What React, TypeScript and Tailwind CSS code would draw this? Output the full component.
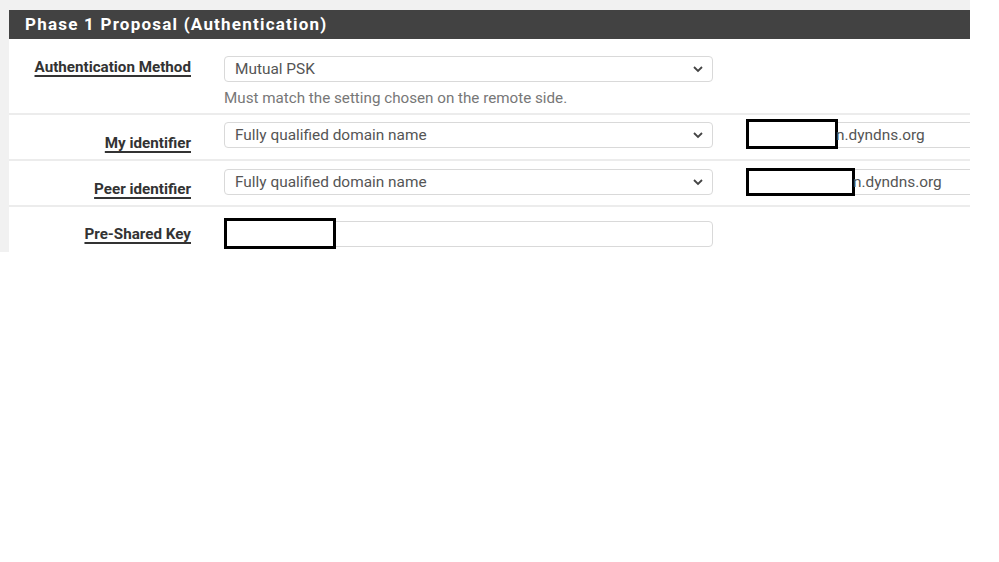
import React from "react";

const Chevron = () => (
  <svg width="12" height="8" viewBox="0 0 12 8" className="shrink-0">
    <path d="M2 2l4 4 4-4" fill="none" stroke="#444" strokeWidth="1.8" />
  </svg>
);

const Select = ({ value }: { value: string }) => (
  <div className="w-[489px] h-[26px] border border-[#d9d9d9] rounded-[4px] bg-white flex items-center justify-between pl-[10px] pr-[8px] text-[15.4px] text-[#555]">
    <span className="pt-px">{value}</span>
    <Chevron />
  </div>
);

const Redacted = ({ w, h }: { w: string; h: string }) => (
  <div className={`${w} ${h} border-[3px] border-black bg-white shrink-0`} />
);

const Label = ({ text, pt }: { text: string; pt: string }) => (
  <div className={`w-[182px] shrink-0 text-right ${pt}`}>
    <span className="text-[15.2px] font-bold text-[#333] underline underline-offset-[3px] decoration-[1.5px]">
      {text}
    </span>
  </div>
);

const App = () => {
  return (
    <div className="w-[999px] h-[562px] bg-white font-['Roboto',sans-serif]">
      <div className="w-[970px] h-[252px] bg-[#f1f1f1] pt-[10px] pl-[9px] overflow-hidden">
        <div className="bg-white h-full">
          <div className="h-[29px] bg-[#424242] text-white font-bold text-[17px] tracking-[1.22px] pl-[16px] flex items-center">
            Phase 1 Proposal (Authentication)
          </div>

          <div className="h-[76px] flex border-b-2 border-[#ececec]">
            <Label text="Authentication Method" pt="pt-[16px]" />
            <div className="ml-[33px] pt-[17px]">
              <Select value="Mutual PSK" />
              <div className="mt-[5px] text-[15.2px] text-[#777]">
                Must match the setting chosen on the remote side.
              </div>
            </div>
          </div>

          <div className="h-[46px] flex border-b-2 border-[#ececec]">
            <Label text="My identifier" pt="pt-[16px]" />
            <div className="ml-[33px] pt-[7px]">
              <Select value="Fully qualified domain name" />
            </div>
            <div className="ml-[33px] pt-[7px] flex-1">
              <div className="h-[26px] border-y border-l border-[#d9d9d9] rounded-l-[4px] flex items-center text-[15.4px] text-[#555]">
                <div className="-ml-px -mt-[2px]"><Redacted w="w-[92px]" h="h-[30px]" /></div>
                <span className="-ml-[2px] pt-px">n.dyndns.org</span>
              </div>
            </div>
          </div>

          <div className="h-[46px] flex border-b-2 border-[#ececec]">
            <Label text="Peer identifier" pt="pt-[16px]" />
            <div className="ml-[33px] pt-[8px]">
              <Select value="Fully qualified domain name" />
            </div>
            <div className="ml-[33px] pt-[8px] flex-1">
              <div className="h-[26px] border-y border-l border-[#d9d9d9] rounded-l-[4px] flex items-center text-[15.4px] text-[#555]">
                <div className="-ml-px"><Redacted w="w-[109px]" h="h-[28px]" /></div>
                <span className="-ml-[2px] pt-px">n.dyndns.org</span>
              </div>
            </div>
          </div>

          <div className="flex">
            <Label text="Pre-Shared Key" pt="pt-[15px]" />
            <div className="ml-[33px] pt-[14px]">
              <div className="w-[489px] h-[26px] border border-[#d9d9d9] rounded-[4px] bg-white flex items-center">
                <div className="-ml-px -mt-[1px]"><Redacted w="w-[112px]" h="h-[31px]" /></div>
              </div>
            </div>
          </div>
        </div>
      </div>
    </div>
  );
};

export default App;
